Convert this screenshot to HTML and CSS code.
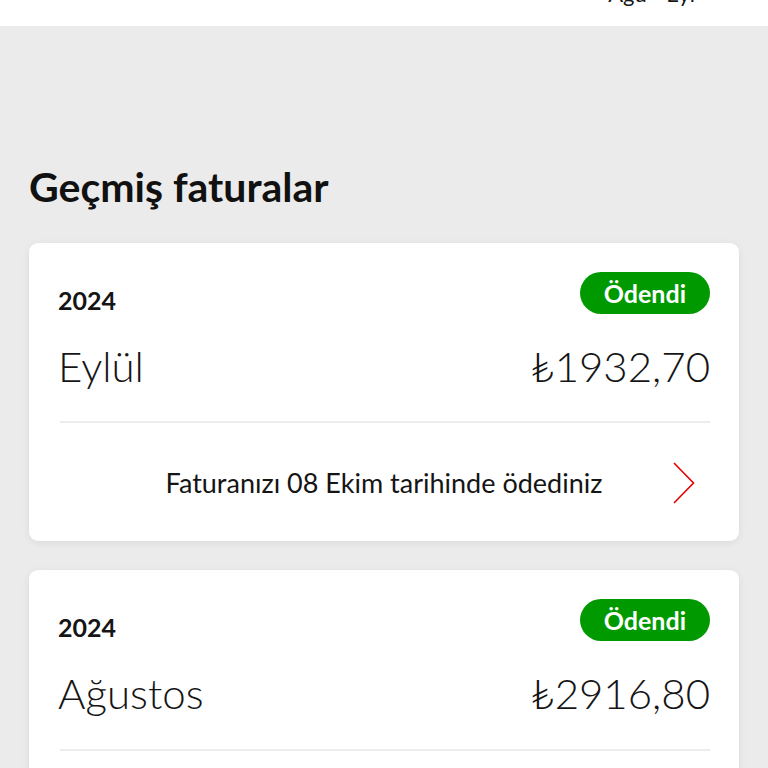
FILE: index.html
```html
<!DOCTYPE html>
<html lang="tr">
<head>
<meta charset="utf-8">
<title>Geçmiş faturalar</title>
<link rel="stylesheet" href="styles.css">
</head>
<body>
<header class="topbar">
  <span class="topbar-text">Ağu - Eyl</span>
</header>
<main class="page">
  <h1 class="title">Geçmiş faturalar</h1>
  <section class="card">
    <div class="row-top">
      <span class="year">2024</span>
      <span class="badge">Ödendi</span>
    </div>
    <div class="row-main">
      <span class="month">Eylül</span>
      <span class="amount">₺1932,70</span>
    </div>
    <div class="divider"></div>
    <div class="footer">
      <span class="footer-text">Faturanızı 08 Ekim tarihinde ödediniz</span>
      <svg class="chevron" width="24" height="42" viewBox="0 0 24 42" aria-hidden="true">
        <path d="M2 1 L21.5 21 L2 41" fill="none" stroke="#e60000" stroke-width="1.6"/>
      </svg>
    </div>
  </section>
  <section class="card">
    <div class="row-top">
      <span class="year">2024</span>
      <span class="badge">Ödendi</span>
    </div>
    <div class="row-main">
      <span class="month">Ağustos</span>
      <span class="amount">₺2916,80</span>
    </div>
    <div class="divider"></div>
    <div class="footer">
      <span class="footer-text">Faturanızı 08 Eylül tarihinde ödediniz</span>
      <svg class="chevron" width="24" height="42" viewBox="0 0 24 42" aria-hidden="true">
        <path d="M2 1 L21.5 21 L2 41" fill="none" stroke="#e60000" stroke-width="1.6"/>
      </svg>
    </div>
  </section>
</main>
</body>
</html>
```
FILE: styles.css
```css
* { box-sizing: border-box; }
html, body {
  margin: 0;
  padding: 0;
  background: #ebebeb;
  font-family: "Lato", "Noto Sans", "DejaVu Sans", sans-serif;
  color: #151515;
}
.topbar {
  height: 26px;
  background: #ffffff;
  overflow: hidden;
  display: flex;
  justify-content: flex-end;
  padding-right: 73px;
}
.topbar-text {
  font-size: 22px;
  line-height: 22px;
  margin-top: -17.5px;
}
.page {
  padding: 135.5px 29px 40px 29px;
  display: flex;
  flex-direction: column;
  gap: 29px;
}
.title {
  margin: 0 0 3.3px 0;
  font-size: 41px;
  line-height: 1.2;
  font-weight: 700;
  color: #111111;
}
.card {
  background: #ffffff;
  border-radius: 9px;
  box-shadow: 0 2px 8px rgba(0, 0, 0, 0.07);
  padding: 29px 29px 0 29px;
}
.row-top {
  display: flex;
  justify-content: space-between;
  align-items: flex-end;
}
.year {
  font-size: 25px;
  line-height: 1.2;
  font-weight: 700;
  margin-bottom: -1px;
}
.badge {
  background: #009a00;
  color: #ffffff;
  font-size: 25px;
  font-weight: 700;
  line-height: 42px;
  height: 42px;
  padding: 0 24px;
  border-radius: 21px;
}
.row-main {
  display: flex;
  justify-content: space-between;
  align-items: baseline;
  margin-top: 27px;
}
.month, .amount {
  font-size: 42px;
  line-height: 1.2;
  font-weight: 300;
}
.divider {
  height: 2px;
  background: #ececec;
  margin: 30px 0 0 2px;
}
.footer {
  display: grid;
  grid-template-columns: 1fr auto 1fr;
  align-items: center;
  padding: 38.6px 0 37.4px 0;
}
.footer-text {
  grid-column: 2;
  font-size: 27px;
  line-height: 1.2;
  font-weight: 400;
}
.chevron {
  grid-column: 3;
  justify-self: end;
  margin-right: 14px;
}
```
